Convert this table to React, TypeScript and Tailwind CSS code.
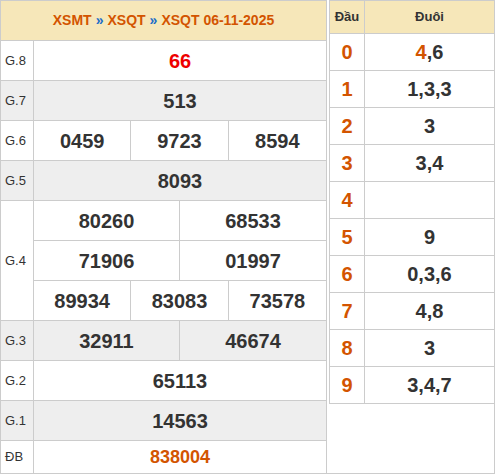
import React from "react";

const font = { fontFamily: '"Liberation Sans", Arial, sans-serif' };

type Row = { label: string; nums: string[][]; gray?: boolean; kind?: "red" | "db" };

const rows: Row[] = [
  { label: "G.8", nums: [["66"]], kind: "red" },
  { label: "G.7", nums: [["513"]], gray: true },
  { label: "G.6", nums: [["0459", "9723", "8594"]] },
  { label: "G.5", nums: [["8093"]], gray: true },
  {
    label: "G.4",
    nums: [
      ["80260", "68533"],
      ["71906", "01997"],
      ["89934", "83083", "73578"],
    ],
  },
  { label: "G.3", nums: [["32911", "46674"]], gray: true },
  { label: "G.2", nums: [["65113"]] },
  { label: "G.1", nums: [["14563"]], gray: true },
];

const loto: [string, React.ReactNode][] = [
  ["0", <><span className="text-[#d35400]">4</span>,6</>],
  ["1", "1,3,3"],
  ["2", "3"],
  ["3", "3,4"],
  ["4", ""],
  ["5", "9"],
  ["6", "0,3,6"],
  ["7", "4,8"],
  ["8", "3"],
  ["9", "3,4,7"],
];

const gridCols: Record<number, string> = {
  1: "grid-cols-1",
  2: "grid-cols-2",
  3: "grid-cols-3",
};

function NumLine({ nums, kind }: { nums: string[]; kind?: Row["kind"] }) {
  const color = kind === "red" ? "text-[#ee0000]" : "text-[#333]";
  return (
    <div className={`grid h-[40px] border-b border-[#ccc] ${gridCols[nums.length]}`}>
      {nums.map((n, i) => (
        <div
          key={i}
          className={`flex items-center justify-center text-[20px] font-bold ${color} ${
            i < nums.length - 1 ? "border-r border-[#ccc]" : ""
          }`}
        >
          {n}
        </div>
      ))}
    </div>
  );
}

export default function App() {
  return (
    <div className="flex h-[474px] w-[495px] bg-white" style={font}>
      {/* left: prizes */}
      <div className="flex w-[327px] flex-col border border-[#ccc]">
        <div className="flex h-[40px] items-center justify-center border-b border-[#ccc] bg-[#f6e7b9] text-[14px] font-bold text-[#d35400]">
          XSMT <span className="mx-[4px] text-[#1a6cc8]">»</span> XSQT{" "}
          <span className="mx-[4px] text-[#1a6cc8]">»</span> XSQT 06-11-2025
        </div>
        {rows.map((r) => (
          <div key={r.label} className={`flex ${r.gray ? "bg-[#eeeeee]" : ""}`}>
            <div className="flex w-[33px] items-center border-b border-r border-[#ccc] pl-[4px] text-[13px] text-[#333]">
              {r.label}
            </div>
            <div className="flex flex-1 flex-col">
              {r.nums.map((line, i) => (
                <NumLine key={i} nums={line} kind={r.kind} />
              ))}
            </div>
          </div>
        ))}
        <div className="flex flex-1">
          <div className="flex w-[33px] items-center border-r border-[#ccc] pl-[4px] text-[13px] text-[#333]">
            ĐB
          </div>
          <div className="flex flex-1 items-center justify-center text-[18px] font-bold text-[#d35400]">
            838004
          </div>
        </div>
      </div>

      {/* right: loto */}
      <div className="flex flex-1 flex-col border-b border-r border-[#ccc] pl-[2px]">
        <div className="flex flex-col border-l border-t border-[#ccc]">
          <div className="flex h-[33px] border-b border-[#ccc] bg-[#f6e7b9] text-[13px] font-bold text-[#333]">
            <div className="flex w-[35px] items-center justify-center border-r border-[#ccc]">Đầu</div>
            <div className="flex flex-1 items-center justify-center">Đuôi</div>
          </div>
          {loto.map(([d, t]) => (
            <div key={d} className="flex h-[37px] border-b border-[#ccc] text-[20px] font-bold">
              <div className="flex w-[35px] items-center justify-center border-r border-[#ccc] text-[#d35400]">
                {d}
              </div>
              <div className="flex flex-1 items-center justify-center text-[#333]">{t}</div>
            </div>
          ))}
        </div>
      </div>
    </div>
  );
}
